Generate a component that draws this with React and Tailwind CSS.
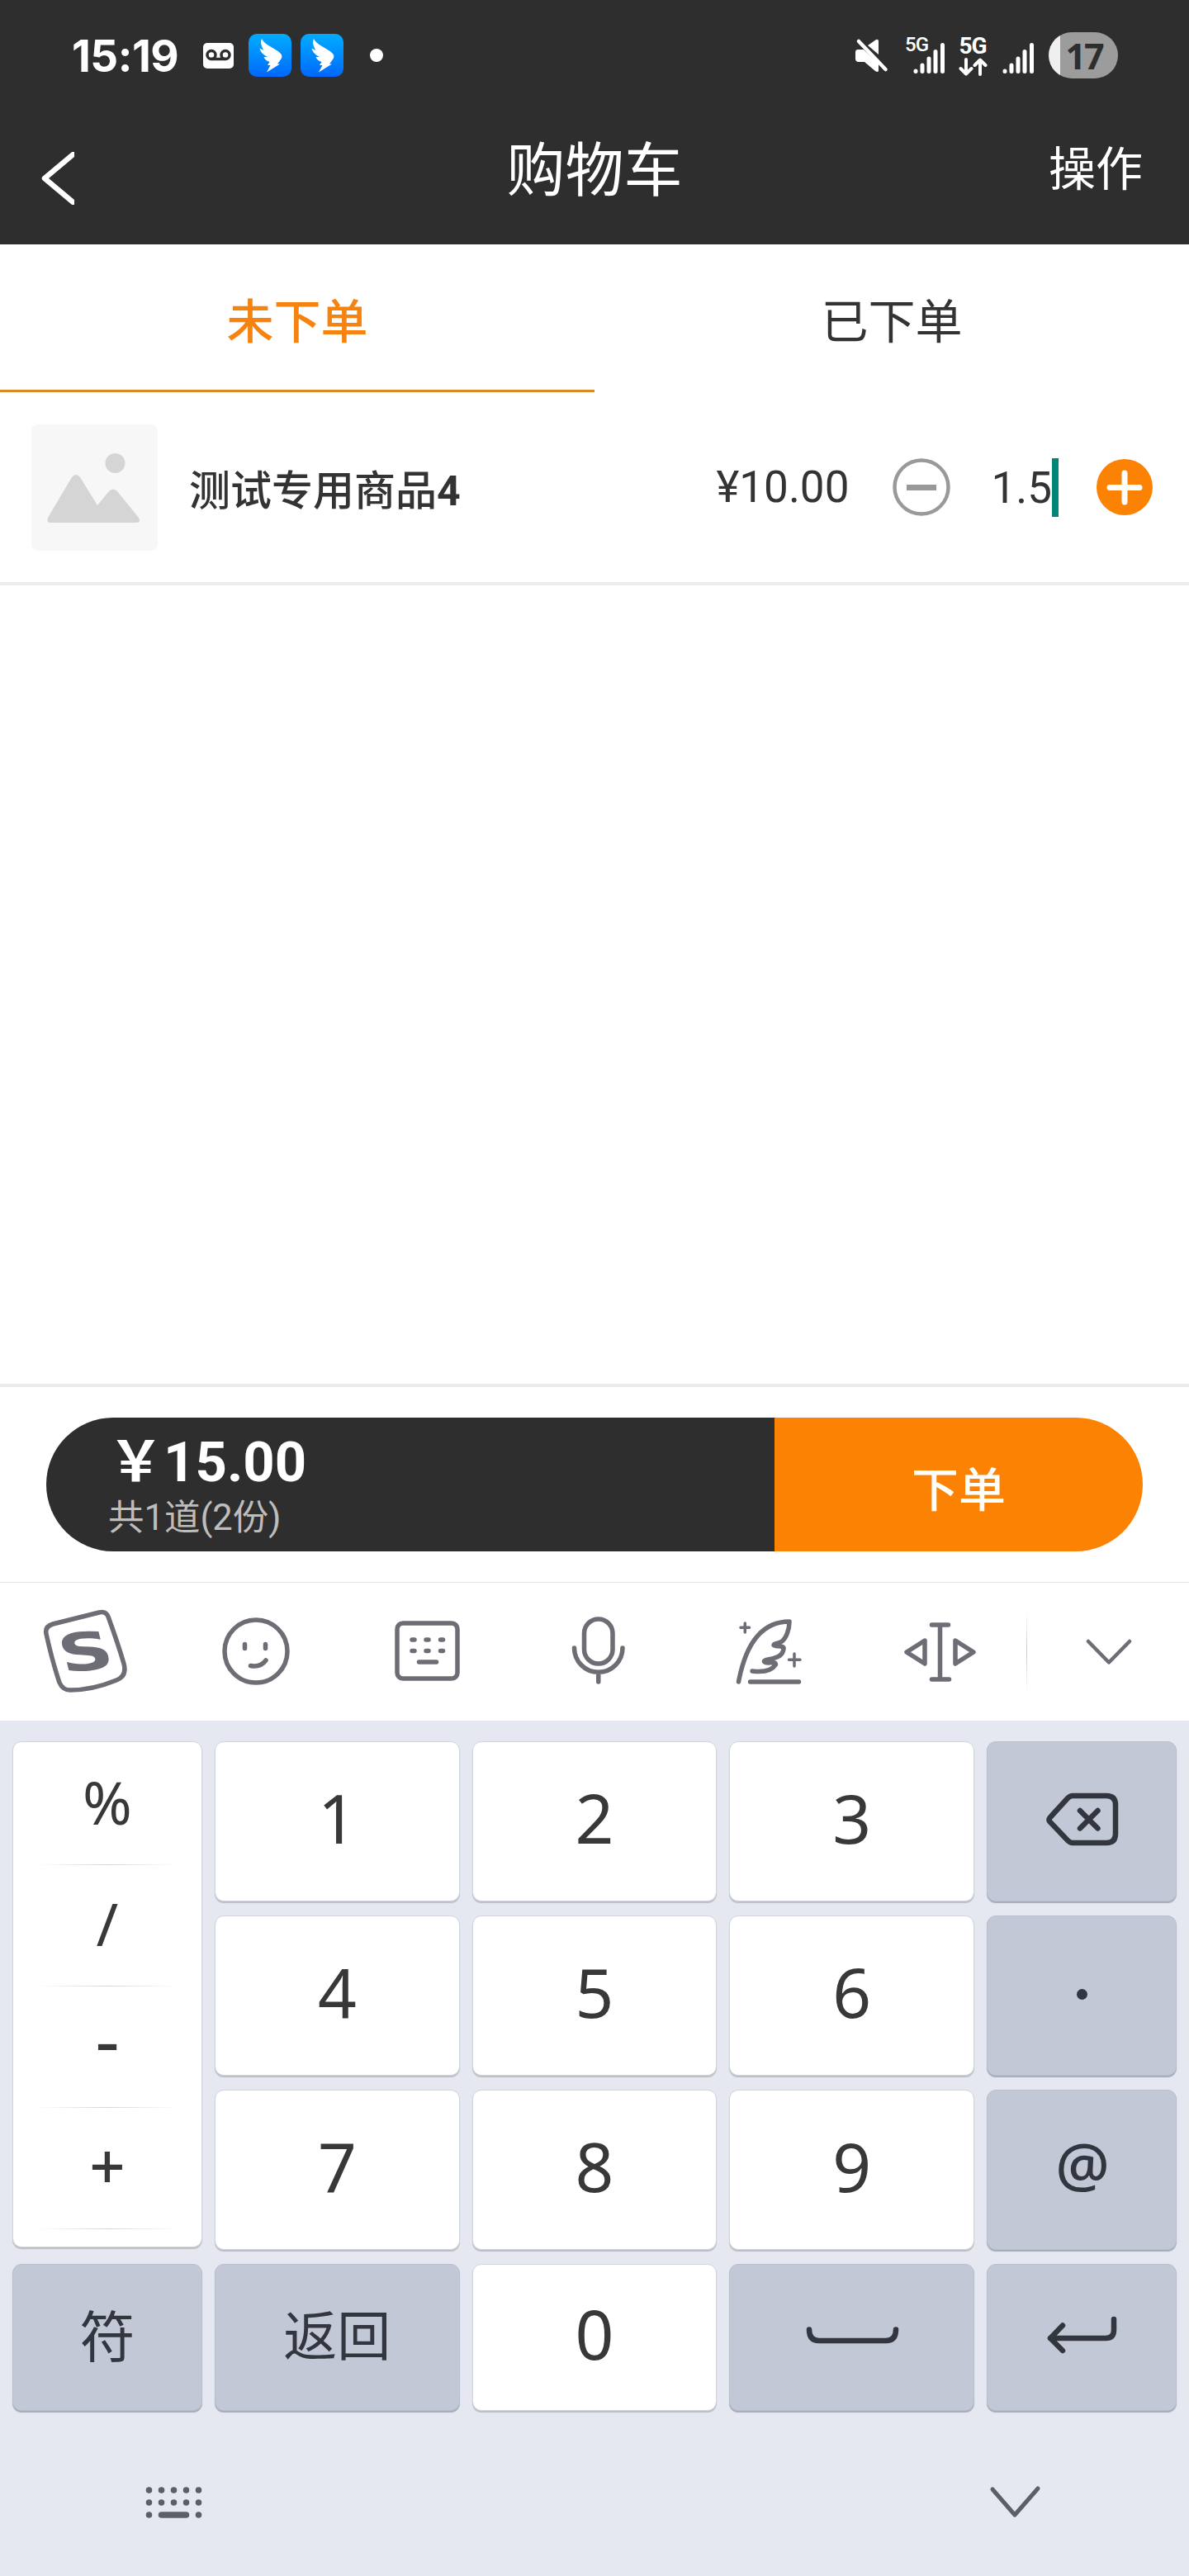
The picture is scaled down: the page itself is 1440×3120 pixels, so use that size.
import clsx from 'clsx';

const cjk = 'font-["Noto_Sans_CJK_SC",sans-serif]';
const roboto = 'font-[Roboto,"Noto_Sans_CJK_SC",sans-serif]';
const noto = 'font-["Noto_Sans","Noto_Sans_CJK_SC",sans-serif]';

function WingIcon({ className }) {
  return (
    <svg viewBox="0 0 52 52" className={clsx('h-[52px] w-[52px] rounded-[10px] bg-linear-to-b from-[#00acff] to-[#0567fb]', className)}>
      <path
        fill="#fff"
        d="M16 6C19 13 33 18 38 23C41 26 41 28 39 31L35 36.500H38L22 46.500L26.500 38H23L25.500 34C22 33 19.500 31 18.500 28L23 28C18 25.500 14.500 22 13.500 17.500L18.500 20C15.500 15 14 10 16 6Z"
      />
    </svg>
  );
}

function SignalBars({ className }) {
  return (
    <svg viewBox="0 0 40 40" className={clsx('h-10 w-10', className)} stroke="#fff" strokeWidth="5" strokeLinecap="round">
      <path d="M3 36.500V36M11 36.500V29M19 36.500V21M27 36.500V12.500M35.500 36.500V4.500" />
    </svg>
  );
}

function StatusBar() {
  return (
    <div className="flex h-[134px] items-center pr-[86px] pl-[87px] text-white">
      <span className="w-[132px] pt-0.5 font-[Inter,sans-serif] text-[53px] leading-none font-bold tracking-[-0.5px]">15:19</span>
      <svg viewBox="0 0 37 31" className="ml-[27px] h-[31px] w-[37px]" fill="none">
        <rect width="37" height="31" rx="5" fill="#fff" />
        <g stroke="#2e2e2e" strokeWidth="3.500">
          <circle cx="10" cy="14.500" r="5" />
          <circle cx="27" cy="14.500" r="5" />
          <path d="M10 19.500H27" />
        </g>
      </svg>
      <WingIcon className="ml-[18px]" />
      <WingIcon className="ml-[11px]" />
      <span className="ml-8 h-4 w-4 rounded-full bg-white" />

      <svg viewBox="0 0 42 42" className="ml-auto h-[42px] w-[42px]">
        <path d="M5 14H12L30 31V40Q29 42 26 40L13 29H6Q2 29 2 25V17Q2 14 5 14Z" fill="#fff" />
        <path d="M17 9L27 2Q30 1 30 4V20Z" fill="#fff" />
        <path d="M5 1L41 38" stroke="#2e2e2e" strokeWidth="5" />
        <path d="M6 4L38.500 38" stroke="#fff" strokeWidth="4.500" strokeLinecap="round" />
      </svg>
      <div className="relative mr-px ml-5 h-[46px] w-[50px]">
        <span className="absolute -top-0.5 left-0 font-[Roboto,sans-serif] text-[24px] leading-[24px] font-medium tracking-[-1px]">5G</span>
        <SignalBars className="absolute right-0 bottom-0" />
      </div>
      <div className="ml-3 flex h-[50px] w-[38px] flex-col items-center">
        <span className="font-[Roboto,sans-serif] text-[28px] leading-[28px] font-bold tracking-[-1px]">5G</span>
        <svg viewBox="0 0 36 22" className="h-[22px] w-9 shrink-0" fill="none" stroke="#fff" strokeWidth="4" strokeLinecap="round" strokeLinejoin="round">
          <path d="M10 2V19M3.500 13L10 19.500L16.500 13M27 20V3M20.500 9L27 2.500L33.500 9" />
        </svg>
      </div>
      <SignalBars className="mt-1.5 ml-[17px]" />
      <div className="ml-4 flex h-14 w-[84px] items-center justify-center rounded-full bg-linear-to-r from-[#efefef] from-[17%] to-[#9c9c9c] to-[17%] pl-0.5">
        <span className="font-['Open_Sans',sans-serif] text-[43px] leading-none font-bold tracking-[-2px] text-[#2e2e2e]">17</span>
      </div>
    </div>
  );
}

function Header() {
  return (
    <header className="h-[296px] bg-[#2e2e2e]">
      <StatusBar />
      <div className={clsx('grid h-[132px] grid-cols-[1fr_auto_1fr] items-center px-14 text-white', cjk)}>
        <svg viewBox="0 0 42 64" className="mt-8 -ml-2 h-16 w-[42px] overflow-hidden" fill="none" stroke="#fff" strokeWidth="6.500">
          <path d="M43 1L6 32L43 63" strokeLinejoin="round" />
        </svg>
        <h1 className="text-[71px] leading-none">购物车</h1>
        <span className="justify-self-end text-[57px] leading-none">操作</span>
      </div>
    </header>
  );
}

function Tabs() {
  return (
    <nav className={clsx('flex h-[179px] text-[57px] leading-none', cjk)}>
      <button className="flex-1 border-b-[3px] border-[#d98a26] pt-[3px] font-medium text-[#f68310]">未下单</button>
      <button className="flex-1 border-b-[3px] border-transparent pt-[3px] text-[#333]">已下单</button>
    </nav>
  );
}

function CartItem() {
  return (
    <div className="flex h-[234px] items-center border-b-4 border-[#ededed] pr-11 pl-[38px] text-[#333]">
      <svg viewBox="0 0 153 153" className="h-[153px] w-[153px] rounded-[8px] bg-[#f7f7f7]">
        <circle cx="101.500" cy="47" r="12" fill="#d5d5d5" />
        <path
          d="M23 119Q18 119 20 113L49 64Q54 58 59 64L80 98L94 81Q99 76 104 81L130 113Q133 119 127 119Z"
          fill="#d5d5d5"
        />
      </svg>
      <span className={clsx('ml-[38px] flex-1 pt-1 text-[50px] leading-none font-medium', cjk)}>
        测试专用商品<span className="font-[Roboto,sans-serif] font-bold">4</span>
      </span>
      <span className={clsx('text-[53px] leading-none', roboto)}>¥10.00</span>
      <svg viewBox="0 0 70 70" className="ml-[53px] h-[70px] w-[70px]" fill="none" stroke="#999">
        <circle cx="35" cy="35" r="32.500" strokeWidth="4.500" />
        <path d="M17 35.500H53" strokeWidth="7" />
      </svg>
      <span className={clsx('ml-[49px] pt-0.5 text-[53px] leading-none', roboto)}>1.5</span>
      <span className="h-[71px] w-2 bg-[#008577]" />
      <svg viewBox="0 0 68 68" className="ml-[46px] h-[68px] w-[68px]">
        <circle cx="34" cy="34" r="34" fill="#fb8203" />
        <path d="M16 34.500H52M34 17V52" stroke="#fff" strokeWidth="7" strokeLinecap="round" />
      </svg>
    </div>
  );
}

function OrderBar() {
  return (
    <div className="h-[240px] border-t-4 border-[#ebebeb] px-14 pt-[37px]">
      <div className="flex h-[162px] overflow-hidden rounded-full">
        <div className={clsx('w-[882px] bg-[#2e2e2e] pt-[18px] pl-[75px]', roboto)}>
          <p className="text-[67px] leading-[72px] font-bold text-white">￥15.00</p>
          <p className="text-[43.500px] leading-[64px] text-[#bdbdbd]">共1道(2份)</p>
        </div>
        <button className={clsx('flex-1 bg-[#fb8203] pt-1 text-[57px] leading-none font-medium text-white', cjk)}>下单</button>
      </div>
    </div>
  );
}

function ToolIcon({ children }) {
  return (
    <div className="flex w-[207px] justify-center">
      <svg viewBox="0 0 104 104" className="h-[104px] w-[104px]" fill="none" stroke="#6c6d75" strokeWidth="5.500" strokeLinecap="round" strokeLinejoin="round">
        {children}
      </svg>
    </div>
  );
}

function Toolbar() {
  return (
    <div className="flex h-[168px] items-center border-t border-[#e5e5e5]">
      <ToolIcon>
        <path d="M12 18L68 4Q76 2 79 9Q91 42 98 66Q102 81 89 86Q60 98 33 98Q24 98 20 89Q11 62 4 30Q2 21 12 18Z" />
        <text
          transform="translate(51.5 51) rotate(-6) skewX(8) scale(1.4 1)"
          y="23"
          textAnchor="middle"
          stroke="none"
          fill="#6c6d75"
          className="font-['DejaVu_Sans',sans-serif] text-[64px] font-bold"
        >
          S
        </text>
      </ToolIcon>
      <ToolIcon>
        <circle cx="51" cy="51" r="38" />
        <path d="M37.500 42.500V47.500M62.500 42.500V47.500M44.500 68.500Q56 71 63 62" />
      </ToolIcon>
      <ToolIcon>
        <rect x="15" y="17" width="73" height="67" rx="7" />
        <path d="M33 37H36M50 37H53M67.500 37H70.500M33 50.500H36M50 50.500H53M67.500 50.500H70.500M41.500 64H62.500" />
      </ToolIcon>
      <ToolIcon>
        <rect x="34.500" y="12" width="34.500" height="54" rx="17.250" />
        <path d="M22.500 47A29.250 29.250 0 0 0 81 47M51.750 77V88" />
      </ToolIcon>
      <ToolIcon>
        <path d="M14.500 88C22 48 39 15 76 15C76 25 72 35 67 39C63 42 57 41 57 43.500C58 46 70 43 69 48C68 57 61 58 55 60C49 61 44 62 46 64C49 67 59 62 59.500 67C55 74 47 77 31 75M28.500 88H87.500" />
        <path d="M22.300 17V28M17 22.300H27.500M82 54V69M75.500 61.300H89" strokeWidth="3.500" />
      </ToolIcon>
      <ToolIcon>
        <path d="M51.500 19V85M41.500 19H61.500M41.500 85H62.500M33 38L11 52L33 66ZM70 38L92 52L70 66Z" />
      </ToolIcon>
      <div className="ml-px h-[98px] w-px bg-linear-to-b from-transparent via-[#c8c8cc] to-transparent" />
      <div className="flex flex-1 justify-center">
        <svg viewBox="0 0 58 34" className="h-[34px] w-[58px]" fill="none" stroke="#6c6d75" strokeWidth="4.500" strokeLinecap="round" strokeLinejoin="round">
          <path d="M5 4L30 29.500L55 4" />
        </svg>
      </div>
    </div>
  );
}

function Key({ dark, children, className = 'pb-2.5 text-[82px]' }) {
  return (
    <button
      className={clsx(
        'flex items-center justify-center rounded-[11px] border leading-none',
        dark
          ? 'border-[#b8c0cf] bg-[#c2c8d6] text-[#33363f] shadow-[0_2px_1px_#a4acbb]'
          : 'border-[#d0d4de] bg-white text-[#383838] shadow-[0_2px_1px_#bcbec4]',
        className,
      )}
    >
      {children}
    </button>
  );
}

function KeyIcon({ children, viewBox, className }) {
  return (
    <svg viewBox={viewBox} className={className} fill="none" stroke="#33363f" strokeWidth="6.500" strokeLinecap="round" strokeLinejoin="round">
      {children}
    </svg>
  );
}

function SymbolCell({ children, className = 'pb-1.5 text-[72px]' }) {
  return (
    <div className="flex h-[147px] flex-col items-center">
      <div className={clsx('flex flex-1 items-center leading-none', className)}>{children}</div>
      <div className="h-px w-[172px] bg-linear-to-r from-transparent from-0% via-[#d6d6d6] via-50% to-transparent to-100%" />
    </div>
  );
}

function Keyboard() {
  return (
    <div className="h-[1036px] bg-[#e5e8f1]">
      <div className={clsx('grid grid-cols-[230px_1fr_1fr_1fr_230px] grid-rows-[194px_194px_194px_178px] gap-x-[15px] gap-y-[17px] px-[15px] pt-[25px]', noto)}>
        <div className="row-span-3 mb-[3px] rounded-[11px] border border-[#d0d4de] bg-white pt-0.5 text-[#383838] shadow-[0_2px_1px_#bcbec4]">
          <SymbolCell>%</SymbolCell>
          <SymbolCell>/</SymbolCell>
          <SymbolCell className="pb-5 text-[92px]">-</SymbolCell>
          <SymbolCell className="pb-1.5 text-[76px] font-medium">+</SymbolCell>
        </div>
        <Key>1</Key>
        <Key>2</Key>
        <Key>3</Key>
        <Key dark className="p-0">
          <KeyIcon viewBox="0 0 96 72" className="h-[72px] w-24">
            <path d="M37 5H78Q89 5 89 16V51Q89 62 78 62H37Q34 62 31 59L10 37Q7 34 10 31L31 8Q34 5 37 5ZM46 23L67.500 44.500M67.500 23L46 44.500" />
          </KeyIcon>
        </Key>
        <Key>4</Key>
        <Key>5</Key>
        <Key>6</Key>
        <Key dark className="p-0">
          <span className="mb-1 ml-0.5 h-[13px] w-[13px] rounded-full bg-[#33363f]" />
        </Key>
        <Key>7</Key>
        <Key>8</Key>
        <Key>9</Key>
        <Key dark className="pb-4 pl-0.5 text-[73px] font-medium">@</Key>
        <Key dark className={clsx('pb-3 text-[67px]', cjk)}>符</Key>
        <Key dark className={clsx('pb-3 text-[65px]', cjk)}>返回</Key>
        <Key>0</Key>
        <Key dark className="p-0">
          <KeyIcon viewBox="0 0 120 72" className="h-[72px] w-[120px]">
            <path d="M8 26.500Q8 40 20 40H101Q113 40 113 26.500" />
          </KeyIcon>
        </Key>
        <Key dark className="p-0">
          <KeyIcon viewBox="0 0 96 72" className="h-[72px] w-24">
            <path d="M10 37H77Q87 37 87 27V14M25 21.500L10 37L25 52" />
          </KeyIcon>
        </Key>
      </div>
      <div className="flex items-center justify-between pt-[90px] pr-[178px] pl-44">
        <svg viewBox="0 0 70 40" className="h-10 w-[70px]" stroke="#5b5f69" strokeWidth="7.500" strokeLinecap="round">
          <path d="M4.500 5h.01M19.500 5h.01M34.500 5h.01M49.500 5h.01M64.500 5h.01M4.500 20h.01M19.500 20h.01M34.500 20h.01M49.500 20h.01M64.500 20h.01M4.500 35h.01M19.500 35H49.500M64.500 35h.01" />
        </svg>
        <svg viewBox="0 0 66 42" className="h-[42px] w-[66px]" fill="none" stroke="#5b5f69" strokeWidth="5" strokeLinecap="round" strokeLinejoin="round">
          <path d="M6 5L33 36L61 4" />
        </svg>
      </div>
    </div>
  );
}

export default function App() {
  return (
    <div className="flex h-[3120px] w-[1440px] flex-col overflow-hidden bg-white">
      <Header />
      <Tabs />
      <main className="flex-1">
        <CartItem />
      </main>
      <OrderBar />
      <Toolbar />
      <Keyboard />
    </div>
  );
}
